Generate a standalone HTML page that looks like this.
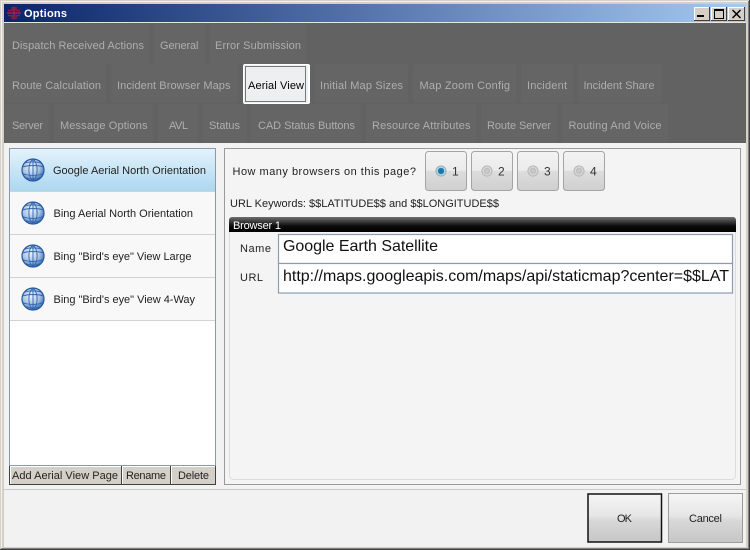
<!DOCTYPE html>
<html>
<head>
<meta charset="utf-8">
<title>Options</title>
<style>
html,body{margin:0;padding:0;width:750px;height:550px;overflow:hidden;background:#d4d0c8}
svg{display:block}
text{font-family:"Liberation Sans",sans-serif;white-space:pre}
.tb{font-size:11px;fill:#aeaeae}
.t{font-size:11px;fill:#222}
.big{font-size:16px;fill:#111}
</style>
</head>
<body>
<svg width="750" height="550" viewBox="0 0 750 550" xmlns="http://www.w3.org/2000/svg">
<defs>
<linearGradient id="title" x1="0" x2="1" y1="0" y2="0"><stop offset="0" stop-color="#0a246a"/><stop offset="1" stop-color="#a6caf0"/></linearGradient>
<linearGradient id="sel" x1="0" x2="0" y1="0" y2="1"><stop offset="0" stop-color="#e4f3fc"/><stop offset="1" stop-color="#acd7f0"/></linearGradient>
<linearGradient id="hdr" x1="0" x2="0" y1="0" y2="1"><stop offset="0" stop-color="#6e6e6e"/><stop offset=".6" stop-color="#0c0c0c"/><stop offset="1" stop-color="#000"/></linearGradient>
<linearGradient id="btn" x1="0" x2="0" y1="0" y2="1"><stop offset="0" stop-color="#f3f3f3"/><stop offset=".49" stop-color="#ebebeb"/><stop offset=".5" stop-color="#dddddd"/><stop offset="1" stop-color="#cfcfcf"/></linearGradient>
<linearGradient id="big" x1="0" x2="0" y1="0" y2="1"><stop offset="0" stop-color="#f6f6f6"/><stop offset=".45" stop-color="#e6e6e6"/><stop offset=".55" stop-color="#d8d8d8"/><stop offset="1" stop-color="#c6c6c6"/></linearGradient>
<radialGradient id="gl" cx=".42" cy=".35" r=".72"><stop offset="0" stop-color="#eef4fb"/><stop offset=".55" stop-color="#a9c2e2"/><stop offset=".85" stop-color="#4f7dbc"/><stop offset="1" stop-color="#1d4f9c"/></radialGradient>
<radialGradient id="rOn" cx=".5" cy=".5" r=".5"><stop offset="0" stop-color="#0d6ea0"/><stop offset=".55" stop-color="#1f86b8"/><stop offset=".62" stop-color="#cfe0ea"/><stop offset="1" stop-color="#8aa0ac"/></radialGradient>
<radialGradient id="rOff" cx=".5" cy=".5" r=".5"><stop offset="0" stop-color="#cfcfcf"/><stop offset=".55" stop-color="#bdbdbd"/><stop offset=".65" stop-color="#e4e4e4"/><stop offset="1" stop-color="#a8a8a8"/></radialGradient>
<symbol id="globe" viewBox="0 0 24 24" width="24" height="24">
  <circle cx="12" cy="12" r="11" fill="url(#gl)" stroke="#24589f" stroke-width="1.200"/>
  <path d="M12 1C6.500 6 6.500 18 12 23M12 1C17.500 6 17.500 18 12 23M12 1V23M1.500 9C7 7 17 7 22.500 9M1.500 15.500C7 18 17 18 22.500 15.500M4 5C9 3.500 15 3.500 20 5M4 19.500C9 21.500 15 21.500 20 19.500" fill="none" stroke="#2f64ad" stroke-width=".9"/>
</symbol>
</defs>

<!-- window frame -->
<rect width="750" height="550" fill="#d4d0c8"/>
<rect x="1" y="1" width="748" height="1" fill="#f4f2ee"/>
<rect x="1" y="1" width="1" height="548" fill="#f4f2ee"/>
<rect x="749" y="0" width="1" height="550" fill="#404040"/>
<rect x="0" y="549" width="750" height="1" fill="#404040"/>
<rect x="748" y="1" width="1" height="548" fill="#808080"/>
<rect x="1" y="548" width="748" height="1" fill="#808080"/>

<!-- title bar -->
<rect x="4" y="4" width="742" height="18" fill="url(#title)"/>
<rect x="4" y="22" width="742" height="1" fill="#e6e6e2"/>
<path d="M14 6.500V19.500M7 13H21" stroke="#b8243e" stroke-width="1.200" fill="none"/>
<path d="M8 10.500H12V7M16 7V10.500H20M8 15.500H12V19M16 19V15.500H20" stroke="#8e1c3e" stroke-width="1.600" fill="none"/>
<text x="24" y="17" font-size="11" font-weight="700" fill="#fff" textLength="43">Options</text>
<g>
  <rect x="694" y="7" width="16" height="14" fill="#d4d0c8"/>
  <path d="M694.500 20.500V7.500H709.500" stroke="#fff" fill="none"/><path d="M694 20.500H709.500V7" stroke="#404040" fill="none"/>
  <rect x="697" y="15" width="7" height="2" fill="#000"/>
  <rect x="711" y="7" width="16" height="14" fill="#d4d0c8"/>
  <path d="M711.500 20.500V7.500H726.500" stroke="#fff" fill="none"/><path d="M711 20.500H726.500V7" stroke="#404040" fill="none"/>
  <path d="M714.500 9.500H723.500V18.500H714.500Z M714 10.500H724" stroke="#000" fill="none"/>
  <rect x="728" y="7" width="17" height="14" fill="#d4d0c8"/>
  <path d="M728.500 20.500V7.500H744.500" stroke="#fff" fill="none"/><path d="M728 20.500H744.500V7" stroke="#404040" fill="none"/>
  <path d="M732.500 10L740.500 18M740.500 10L732.500 18" stroke="#000" stroke-width="1.500" fill="none"/>
</g>

<!-- main body -->
<rect x="4" y="23" width="742" height="524" fill="#f2f2f2"/>

<!-- tab strip -->
<rect x="4" y="23" width="742" height="120" fill="#626262"/>
<g fill="#656565">
  <rect x="5" y="24" width="144" height="40" rx="3"/>
  <rect x="154" y="24" width="51" height="40" rx="3"/>
  <rect x="210" y="24" width="96" height="40" rx="3"/>
  <rect x="5" y="64" width="101" height="39" rx="3"/>
  <rect x="111" y="64" width="127" height="39" rx="3"/>
  <rect x="315" y="64" width="93" height="39" rx="3"/>
  <rect x="413" y="64" width="103" height="39" rx="3"/>
  <rect x="521" y="64" width="52" height="39" rx="3"/>
  <rect x="578" y="64" width="84" height="39" rx="3"/>
  <rect x="5" y="104" width="44" height="39" rx="3"/>
  <rect x="54" y="104" width="99" height="39" rx="3"/>
  <rect x="158" y="104" width="40" height="39" rx="3"/>
  <rect x="203" y="104" width="44" height="39" rx="3"/>
  <rect x="251" y="104" width="110" height="39" rx="3"/>
  <rect x="366" y="104" width="110" height="39" rx="3"/>
  <rect x="481" y="104" width="76" height="39" rx="3"/>
  <rect x="562" y="104" width="106" height="39" rx="3"/>
</g>
<rect x="243" y="64" width="67" height="40" rx="2" fill="#fff"/>
<rect x="244" y="65" width="64" height="38" fill="#eeeff1"/>
<path d="M245.500 66.500H305.500V101.500H245.500Z" fill="none" stroke="#000" stroke-dasharray="1 1" shape-rendering="crispEdges"/>
<g>
  <text class="tb" x="12" y="49" textLength="132">Dispatch Received Actions</text>
  <text class="tb" x="160" y="49" textLength="38.500">General</text>
  <text class="tb" x="215" y="49" textLength="86">Error Submission</text>
  <text class="tb" x="12" y="89" textLength="89">Route Calculation</text>
  <text class="tb" x="117" y="89" textLength="113.500">Incident Browser Maps</text>
  <text class="tb" x="320" y="89" textLength="83">Initial Map Sizes</text>
  <text class="tb" x="419.500" y="89" textLength="90.500">Map Zoom Config</text>
  <text class="tb" x="527" y="89" textLength="40">Incident</text>
  <text class="tb" x="583.500" y="89" textLength="71">Incident Share</text>
  <text class="tb" x="12" y="129" textLength="31">Server</text>
  <text class="tb" x="60" y="129" textLength="87.500">Message Options</text>
  <text class="tb" x="169" y="129" textLength="19">AVL</text>
  <text class="tb" x="209" y="129" textLength="31">Status</text>
  <text class="tb" x="258" y="129" textLength="97">CAD Status Buttons</text>
  <text class="tb" x="372" y="129" textLength="98.500">Resource Attributes</text>
  <text class="tb" x="487" y="129" textLength="64">Route Server</text>
  <text class="tb" x="568.500" y="129" textLength="93">Routing And Voice</text>
</g>
<text x="248" y="89" font-size="11" fill="#000" textLength="56">Aerial View</text>

<!-- left list -->
<rect x="9.500" y="148.500" width="206" height="317" fill="#fff" stroke="#8a9aaa"/>
<rect x="10" y="149" width="205" height="42" fill="url(#sel)"/>
<rect x="10" y="192" width="205" height="42" fill="#f8f8f8"/>
<rect x="10" y="235" width="205" height="42" fill="#f8f8f8"/>
<rect x="10" y="278" width="205" height="42" fill="#f8f8f8"/>
<g fill="#d2d2d6">
  <rect x="10" y="191" width="205" height="1"/>
  <rect x="10" y="234" width="205" height="1"/>
  <rect x="10" y="277" width="205" height="1"/>
  <rect x="10" y="320" width="205" height="1"/>
</g>
<use href="#globe" x="21" y="158"/>
<use href="#globe" x="21" y="201"/>
<use href="#globe" x="21" y="244"/>
<use href="#globe" x="21" y="287"/>
<text class="t" x="53" y="174" textLength="153">Google Aerial North Orientation</text>
<text class="t" x="53.500" y="217" textLength="139.500">Bing Aerial North Orientation</text>
<text class="t" x="53.500" y="260" textLength="138">Bing "Bird's eye" View Large</text>
<text class="t" x="53.500" y="303" textLength="141.500">Bing "Bird's eye" View 4-Way</text>

<!-- left buttons -->
<g>
  <rect x="9" y="466" width="207" height="19" fill="#404040"/>
  <rect x="10" y="466" width="111" height="18" fill="#d4d0c8"/>
  <path d="M10.500 484V466.500H121" stroke="#fff" fill="none"/>
  <rect x="122" y="466" width="48" height="18" fill="#d4d0c8"/>
  <path d="M122.500 484V466.500H170" stroke="#fff" fill="none"/>
  <rect x="171" y="466" width="44" height="18" fill="#d4d0c8"/>
  <path d="M171.500 484V466.500H215" stroke="#fff" fill="none"/>
</g>
<text class="t" x="12" y="479" textLength="106">Add Aerial View Page</text>
<text class="t" x="126" y="479" textLength="40">Rename</text>
<text class="t" x="178" y="479" textLength="31">Delete</text>

<!-- right panel -->
<rect x="224.500" y="148.500" width="516" height="336" fill="#f4f4f4" stroke="#9a9a9a"/>
<rect x="229.500" y="222" width="506" height="257.500" rx="4" fill="#f4f4f4" stroke="#dcdcdc"/>
<text class="t" x="232.500" y="175" textLength="183.500">How many browsers on this page?</text>
<text class="t" x="230" y="207" textLength="269">URL Keywords: $$LATITUDE$$ and $$LONGITUDE$$</text>

<!-- radio toggles -->
<g stroke="#a4a4a4" fill="url(#btn)">
  <rect x="425.500" y="151.500" width="41" height="39" rx="3"/>
  <rect x="471.500" y="151.500" width="41" height="39" rx="3"/>
  <rect x="517.500" y="151.500" width="41" height="39" rx="3"/>
  <rect x="563.500" y="151.500" width="41" height="39" rx="3"/>
</g>
<circle cx="441" cy="171" r="5.500" fill="url(#rOn)"/>
<circle cx="487" cy="171" r="5.500" fill="url(#rOff)"/>
<circle cx="533" cy="171" r="5.500" fill="url(#rOff)"/>
<circle cx="579" cy="171" r="5.500" fill="url(#rOff)"/>
<g font-size="12" fill="#333">
  <text x="452" y="175.500">1</text>
  <text x="498" y="175.500">2</text>
  <text x="544" y="175.500">3</text>
  <text x="590" y="175.500">4</text>
</g>

<!-- browser group -->
<path d="M229 232V220a3 3 0 0 1 3-3H733a3 3 0 0 1 3 3V232Z" fill="url(#hdr)"/>
<text x="233" y="229" font-size="11" fill="#fff" textLength="48">Browser 1</text>
<rect x="278.500" y="234.500" width="454" height="29" fill="#fff" stroke="#8e9bb0" stroke-width="1.200"/>
<rect x="278.500" y="263.500" width="454" height="29.500" fill="#fff" stroke="#8e9bb0" stroke-width="1.200"/>
<text class="t" x="240" y="252" textLength="31">Name</text>
<text class="t" x="240" y="281" textLength="23">URL</text>
<text class="big" x="283" y="251" textLength="155">Google Earth Satellite</text>
<text class="big" x="283" y="281" textLength="446">http://maps.googleapis.com/maps/api/staticmap?center=$$LAT</text>

<!-- footer -->
<rect x="4" y="489" width="742" height="1" fill="#c9c9c9"/>
<rect x="588" y="494" width="73.500" height="48" fill="url(#big)" stroke="#111" stroke-width="1.500"/>
<rect x="668.500" y="493.500" width="74" height="49" fill="url(#big)" stroke="#9c9c9c"/>
<text class="t" x="617" y="522" textLength="15">OK</text>
<text class="t" x="689" y="522" textLength="33">Cancel</text>
</svg>
</body>
</html>
